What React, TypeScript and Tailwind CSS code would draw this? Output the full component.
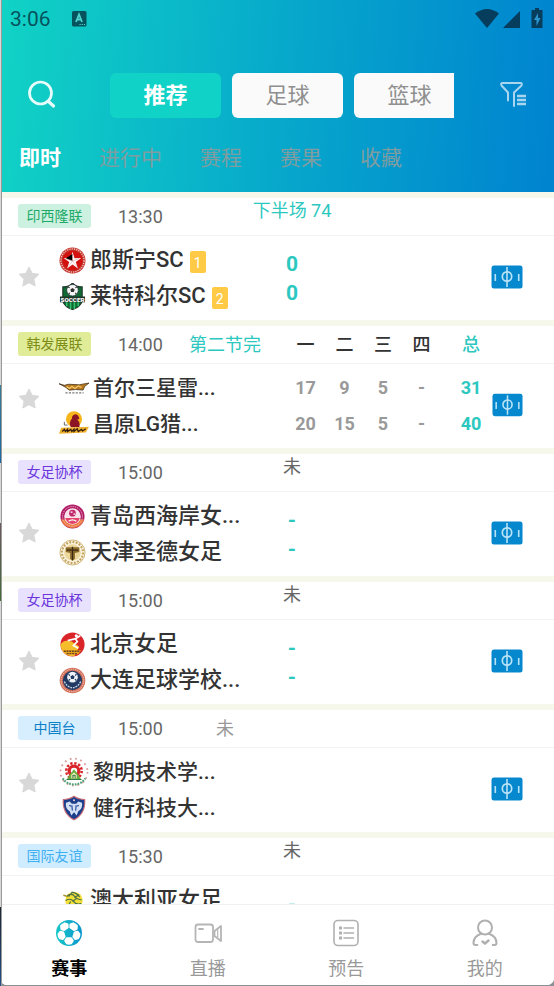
import type { ReactNode } from "react";

const pentagon = (cx: number, cy: number, r: number, turn = -90) =>
  [0, 1, 2, 3, 4]
    .map((i) => {
      const a = ((turn + i * 72) * Math.PI) / 180;
      return `${(cx + r * Math.cos(a)).toFixed(1)},${(cy + r * Math.sin(a)).toFixed(1)}`;
    })
    .join(" ");

const starPoints = (cx: number, cy: number, r: number, inner: number) =>
  Array.from({ length: 10 }, (_, i) => {
    const a = ((-90 + i * 36) * Math.PI) / 180;
    const d = i % 2 ? inner : r;
    return `${(cx + d * Math.cos(a)).toFixed(1)},${(cy + d * Math.sin(a)).toFixed(1)}`;
  }).join(" ");

function Crest({ children, label }: { children: ReactNode; label: string }) {
  return (
    <svg viewBox="0 0 28 28" className="size-full" role="img" aria-label={label}>
      {children}
    </svg>
  );
}

const RedStar = () => (
  <Crest label="郎斯宁SC">
    <circle cx="14" cy="14" r="13.5" fill="#c5302b" />
    <circle cx="14" cy="14" r="12" fill="none" stroke="#eec3b8" strokeWidth="1.4" strokeDasharray="1.4 1" />
    <circle cx="14" cy="14" r="10.2" fill="#d3110f" />
    <polygon points={starPoints(14, 14.5, 9.6, 3.6)} fill="#fff" />
    <path d="M14 7v7.5L7 12M14 14.5l7-2.500M14 14.5l-4.500 6M14 14.5l4.500 6" stroke="#e0a0a0" strokeWidth=".6" />
  </Crest>
);

const SoccerShield = () => (
  <Crest label="莱特科尔SC">
    <path d="M4 4q6 .5 10-4 4 4.500 10 4v15q-2 6-10 8.500Q6 25 4 19Z" fill="#0d6b33" stroke="#1b3326" strokeWidth="1.2" />
    <path d="M8 19v5M12 19v8M16 19v8M20 19v5" stroke="#33c26b" strokeWidth="1.6" />
    <circle cx="14" cy="7.500" r="6" fill="#f4f7f5" stroke="#223" strokeWidth=".7" />
    <polygon points={pentagon(14, 7.5, 2.4)} fill="#333" />
    <path d="M9 4l2 1M19 4l-2 1M10 12l1-2M18 12l-1-2" stroke="#333" strokeWidth="1.200" />
    <rect x="1" y="14" width="26" height="6" fill="#20352a" />
    <text x="14" y="19.300" textAnchor="middle" fontSize="6.500" fontWeight="900" fontFamily="Roboto, sans-serif" fill="#fff">
      SOCCER
    </text>
  </Crest>
);

const Thunders = () => (
  <Crest label="首尔三星雷霆">
    <path d="M0 10l5 1.500L9 10.500l10 .500 4-.800 5-.800-4 3-1.500 3.500-7-.500-6 .600-3-2.500Z" fill="#b9791f" stroke="#3c2b15" strokeWidth=".7" />
    <path d="M7 12.500l3 2 2-2 3 2 3-2.500 3 1.500" stroke="#f7ce70" strokeWidth="1.100" fill="none" />
    <path d="M6 18.500h17" stroke="#777" strokeWidth="1.100" strokeDasharray="2 1.200" />
  </Crest>
);

const Sakers = () => (
  <Crest label="昌原LG猎隼">
    <circle cx="14" cy="9.500" r="7.500" fill="#f7b51c" />
    <path d="M11 17q-2-5 1-8 0-3 3-4 3 0 4 4l-2 1q3 2 2 7Z" fill="#8b1524" />
    <path d="M5 12v3h3" stroke="#666" strokeWidth=".9" fill="none" />
    <path d="M2 17.500l26-1-3 5.500-25 1Z" fill="#efb12c" />
    <path d="M3 21l2-2 1 2 2-2v2l3-2 1 2 2-2v2l3-2.500 1 2.500 3-2 1 1.500 3-2" stroke="#2f1a10" strokeWidth="1.200" fill="none" />
  </Crest>
);

const PinkCrest = () => (
  <Crest label="青岛西海岸女足">
    <circle cx="14" cy="14" r="12.500" fill="#b01c66" />
    <path d="M2 17a12.500 12.500 0 0 0 24 0Z" fill="#ec7a3c" />
    <circle cx="14" cy="14" r="10.300" fill="none" stroke="#f2b4c4" strokeDasharray="1.300 1" />
    <circle cx="14" cy="14" r="8.600" fill="#fae3ea" />
    <path d="M6.500 15.500h15a7.600 7.600 0 0 1-15 0Z" fill="#e2456c" />
    <circle cx="14" cy="10.500" r="3.500" fill="#c02a6c" />
    <path d="M12 9.500h2M15 11.500h2M10 19q4-3 8 0" stroke="#fff" strokeWidth="1.300" fill="none" />
  </Crest>
);

const GoldCrest = () => (
  <Crest label="天津圣德女足">
    <circle cx="14" cy="14" r="13" fill="#fbf6e6" stroke="#cbb174" strokeWidth="1" />
    <circle cx="14" cy="14" r="10.900" fill="none" stroke="#c3a35b" strokeWidth="2.200" strokeDasharray="2 1.400" />
    <circle cx="14" cy="14" r="8.600" fill="#ecd79b" />
    <path d="M7 8.500h14v5l-4.500 1V20.500l-2.500 2-2.500-2v-6l-4.500-1Z" fill="#8b6a2c" />
    <path d="M14 8v14M8 11.500h12" stroke="#3b2a13" strokeWidth="1.300" />
  </Crest>
);

const BeijingCrest = () => (
  <Crest label="北京女足">
    <circle cx="14" cy="14" r="12.500" fill="#d9252a" />
    <path d="M1.500 14Q5 8 13 11l8 5-5 10A12.500 12.500 0 0 1 1.500 14Z" fill="#f6bd2b" />
    <path d="M9 10l8-2 2 3-4 4 5 3M17 8l5-3" stroke="#fff" strokeWidth="1.800" fill="none" />
    <circle cx="18" cy="5" r="1.700" fill="#fff" />
    <path d="M4 20h19l-3 4H8Z" fill="#e6a221" />
    <path d="M5 21h17M8 23.500h11" stroke="#6b421d" strokeWidth="1.300" strokeDasharray="2 .800" />
  </Crest>
);

const DalianCrest = () => (
  <Crest label="大连足球学校">
    <circle cx="14" cy="14" r="13.300" fill="#d3705a" />
    <circle cx="14" cy="14" r="11.700" fill="none" stroke="#f3cfc2" strokeDasharray="1.300 1" />
    <circle cx="14" cy="14" r="10" fill="#223a63" />
    <circle cx="14" cy="10.500" r="5.500" fill="#eff3f8" />
    <polygon points={pentagon(14, 10.5, 2.3)} fill="#223a63" />
    <path d="M10 7l1 2M18 7l-1 2M10 14l1.500-1.500M18 14l-1.500-1.500" stroke="#223a63" strokeWidth="1.200" />
    <path d="M5.500 15q3 6 8 6.500M22.500 15q-3 6-8 6.500" stroke="#c7d3e4" strokeWidth="1.500" strokeDasharray="2 1" fill="none" />
  </Crest>
);

const GearCrest = () => (
  <Crest label="黎明技术学院">
    <circle cx="14" cy="14" r="12.600" fill="none" stroke="#d69b9b" strokeWidth="1.700" strokeDasharray="1.600 3.400" />
    <path d="M3.500 20a12.600 12.600 0 0 0 21 0" fill="none" stroke="#4f9f78" strokeWidth="2" strokeDasharray="1.600 1" />
    <circle cx="14" cy="13" r="7.200" fill="none" stroke="#d8262a" strokeWidth="2.400" strokeDasharray="2.200 1.570" />
    <circle cx="14" cy="13" r="6" fill="#d8262a" />
    <circle cx="14" cy="13" r="3" fill="#fff" />
    <path d="M7.500 20.500l4-6 2.500-3 2.500 3 4 6Z" fill="#68ae3e" />
    <path d="M11.500 20v-3.500l2.500-2 2.500 2V20Z" fill="#fff3c2" />
    <path d="M13 20v-3h2v3M7 21h14" stroke="#2e7a40" fill="none" />
  </Crest>
);

const BlueShield = () => (
  <Crest label="健行科技大学">
    <path d="M4 6q6 0 10-3 4 3 10 3 1 13-10 19Q3 19 4 6Z" fill="#1c3f8c" stroke="#c96b74" strokeWidth="1" />
    <path d="M6.500 9l3.500-1 2 2h4l2-2 3.500 1q1 5-3.500 8l-1.500 4-2.500-3-2.500 3L10 17q-4.500-3-3.500-8Z" fill="#d3e0f4" />
    <path d="M12 11.500l.5 5M16 11.500l-.5 5M9.500 11.500l2 .800M18.500 11.500l-2 .800" stroke="#3c5ea6" strokeWidth="1.200" fill="none" />
    <circle cx="14" cy="6.800" r="1" fill="#e6c3c8" />
  </Crest>
);

const YellowBall = () => (
  <Crest label="澳大利亚女足">
    <circle cx="15.500" cy="14" r="9" fill="#f2df3a" />
    <path d="M8.500 9q5-3 8 1t7 3M7 14q5-3 8 1t8 2M13 5.500q5 0 8.500 5M9 19q4-2 7 2M14 5l-4 5M21 8l-5 3M14 15l4-3M12 15l-2 4" stroke="#4b7147" strokeWidth="1.200" fill="none" />
    <path d="M4.500 8.500l5 1.500" stroke="#a18d28" strokeWidth="1.500" />
  </Crest>
);

type Team = { name: string; crest: ReactNode; card?: string; score?: string; quarters?: string[] };
type Match = {
  id: number;
  sport: "football" | "basketball";
  league: string;
  badge: string;
  time: string;
  status: string;
  live?: boolean;
  teams: Team[];
};

const matches: Match[] = [
  {
    id: 1, sport: "football", league: "印西隆联", badge: "bg-[#cdf1e1] text-[#1daa68]", time: "13:30", status: "下半场 74", live: true,
    teams: [
      { name: "郎斯宁SC", crest: <RedStar />, card: "1", score: "0" },
      { name: "莱特科尔SC", crest: <SoccerShield />, card: "2", score: "0" },
    ],
  },
  {
    id: 2, sport: "basketball", league: "韩发展联", badge: "bg-[#e1ec98] text-[#7c8c16]", time: "14:00", status: "第二节完", live: true,
    teams: [
      { name: "首尔三星雷...", crest: <Thunders />, quarters: ["17", "9", "5", "-", "31"] },
      { name: "昌原LG猎...", crest: <Sakers />, quarters: ["20", "15", "5", "-", "40"] },
    ],
  },
  {
    id: 3, sport: "football", league: "女足协杯", badge: "bg-[#e9e2fe] text-[#6b35dc]", time: "15:00", status: "未",
    teams: [
      { name: "青岛西海岸女...", crest: <PinkCrest />, score: "-" },
      { name: "天津圣德女足", crest: <GoldCrest />, score: "-" },
    ],
  },
  {
    id: 4, sport: "football", league: "女足协杯", badge: "bg-[#e9e2fe] text-[#6b35dc]", time: "15:00", status: "未",
    teams: [
      { name: "北京女足", crest: <BeijingCrest />, score: "-" },
      { name: "大连足球学校...", crest: <DalianCrest />, score: "-" },
    ],
  },
  {
    id: 5, sport: "basketball", league: "中国台", badge: "bg-[#d6eefe] text-[#0f80c8]", time: "15:00", status: "未",
    teams: [
      { name: "黎明技术学...", crest: <GearCrest /> },
      { name: "健行科技大...", crest: <BlueShield /> },
    ],
  },
  {
    id: 6, sport: "football", league: "国际友谊", badge: "bg-[#d0ecff] text-[#3fb0f2]", time: "15:30", status: "未",
    teams: [{ name: "澳大利亚女足", crest: <YellowBall />, score: "-" }],
  },
];

function FavouriteButton({ raised }: { raised: boolean }) {
  return (
    <button type="button" aria-label="收藏比赛" className={raised ? "pb-[14px]" : "pb-[2px]"}>
      <svg viewBox="0 0 22 22" className="size-[22px]" fill="#d8d8d8" stroke="#d8d8d8" strokeLinejoin="round">
        <polygon points={starPoints(11, 11.5, 10.5, 5.2)} />
      </svg>
    </button>
  );
}

function PitchButton() {
  return (
    <button type="button" aria-label="比赛动画" className="h-[24px] w-[32px]">
      <svg viewBox="0 0 32 24" className="size-full" fill="none" stroke="#b9e3f7">
        <rect x=".5" y=".5" width="31" height="23" rx="2.500" fill="#0688cf" stroke="none" />
        <circle cx="16" cy="11.500" r="4.700" strokeWidth="1.700" />
        <path d="M16 2v20" strokeWidth="1.600" />
        <path d="M4.300 9v7M27.700 9v7" strokeWidth="1.600" />
      </svg>
    </button>
  );
}

function MatchCard({ match }: { match: Match }) {
  const football = match.sport === "football";
  const hasTable = match.teams.some((t) => t.quarters);
  const tone = match.live ? "text-[#2cc8bf]" : football ? "text-[#666]" : "text-[#999]";
  return (
    <article className="flex h-[128px] shrink-0 border-t-6 border-[#f7f8ec] bg-white">
      <div className={`flex shrink-0 flex-col ${football ? "w-[247px]" : "w-[286px]"}`}>
        <header className="flex h-[38px] shrink-0 items-center border-b border-[#f2f2f2] pl-[18px]">
          <span className={`mb-[2px] h-[24px] w-[73px] rounded-[3px] text-center text-[14px] leading-[24px] ${match.badge}`}>{match.league}</span>
          <time className="ml-[27px] w-[67px] text-[18px] leading-[24px] text-[#666]">{match.time}</time>
          {!football && <span className={`w-[80px] text-center text-[18px] leading-[24px] ${tone}`}>{match.status}</span>}
        </header>
        <div className="flex flex-1 items-center pl-[18px]">
          <FavouriteButton raised={!football} />
          <ul className={`ml-[19px] h-[72px] font-medium text-[#333] ${football ? "text-[22px]" : "text-[21px]"}`}>
            {match.teams.map((team) => (
              <li key={team.name} className="flex h-[36px] items-center">
                <span className={football ? "size-[27px]" : "size-[30px]"}>{team.crest}</span>
                <span className="ml-[4px] leading-[36px] whitespace-nowrap">{team.name}</span>
                {team.card && (
                  <span className="mt-1 ml-[6px] h-[22px] w-[16px] rounded-[2px] bg-[#ffca45] text-center text-[14px] leading-[24px] font-normal text-white">
                    {team.card}
                  </span>
                )}
              </li>
            ))}
          </ul>
        </div>
      </div>

      {football && (
        <div className="flex w-[90px] shrink-0 flex-col text-center">
          <div className={`h-[38px] border-b border-[#f2f2f2] text-[18px] leading-[26px] whitespace-nowrap ${tone}`}>{match.status}</div>
          <div className="flex flex-1 flex-col pt-[14px] text-[21px] leading-[29px] font-bold text-[#2cc8bf]">
            {match.teams.map((team) => (
              <span key={team.name}>{team.score}</span>
            ))}
          </div>
        </div>
      )}

      {hasTable && (
        <table className="h-[122px] w-[206px] shrink-0 table-fixed border-separate border-spacing-0 text-center text-[18px]">
          <thead>
            <tr className="h-[38px] text-[#333]">
              <th scope="col" className="w-[39px] border-b border-[#f2f2f2] p-0 font-medium">一</th>
              <th scope="col" className="w-[39px] border-b border-[#f2f2f2] p-0 font-medium">二</th>
              <th scope="col" className="w-[38px] border-b border-[#f2f2f2] p-0 font-medium">三</th>
              <th scope="col" className="w-[39px] border-b border-[#f2f2f2] p-0 font-medium">四</th>
              <th scope="col" className="border-b border-[#f2f2f2] p-0 pl-[9px] font-medium text-[#2cc8bf]">总</th>
            </tr>
          </thead>
          <tbody className="font-bold text-[#999]">
            {match.teams.map((team, row) => (
              <tr key={team.name} className="h-[42px]">
                {team.quarters?.map((points, i) => (
                  <td key={i} className={`p-0 ${row === 0 ? "pt-1" : "pb-2"} ${i === 4 ? "pl-[9px] text-[#2cc8bf]" : ""}`}>
                    {points}
                  </td>
                ))}
              </tr>
            ))}
          </tbody>
        </table>
      )}

      <div className="flex min-w-0 flex-1 flex-col">
        <div className="h-[38px] shrink-0 border-b border-[#f2f2f2]" />
        <div className="flex flex-1 items-center justify-end pr-[31px] pb-[2px]">
          <PitchButton />
        </div>
      </div>
    </article>
  );
}

function BallIcon() {
  return (
    <svg viewBox="0 0 28 28" className="size-[28px]">
      <defs>
        <linearGradient id="ball" x1="0" x2="1" y1="0" y2="0">
          <stop offset="0" stopColor="#18c8c8" />
          <stop offset="1" stopColor="#0a94cd" />
        </linearGradient>
      </defs>
      <circle cx="14" cy="14" r="13" fill="url(#ball)" />
      <g fill="#fff" stroke="#fff" strokeWidth="2" strokeLinejoin="round">
        {[0, 72, 144, 216, 288].map((turn) => (
          <path key={turn} d="M11.800 19.300h4.400l1.600 2.400-1.600 2.600q-2.200.700-4.400 0l-1.600-2.600Z" transform={`rotate(${turn} 14 14)`} />
        ))}
      </g>
    </svg>
  );
}

const navItems = [
  { label: "赛事", active: true, icon: <BallIcon /> },
  {
    label: "直播",
    icon: (
      <svg viewBox="0 0 28 28" className="size-[28px]" fill="none" stroke="#b5b5b5" strokeWidth="1.800" strokeLinejoin="round">
        <rect x="1.500" y="5.500" width="17.500" height="17.500" rx="2.500" />
        <path d="M5 10h4" strokeLinecap="round" />
        <path d="M20.500 12l6.500-5v15l-6.500-5Z" />
        <path d="M23.700 10.500v8" strokeWidth="1.200" />
      </svg>
    ),
  },
  {
    label: "预告",
    icon: (
      <svg viewBox="0 0 28 28" className="size-[28px]" fill="none" stroke="#b0b0b0" strokeWidth="1.600">
        <rect x="2" y="1.500" width="24" height="25" rx="4" />
        <path d="M12 9h9.500M12 14h9.500M12 19h9.500" strokeLinecap="round" />
        <path d="M7 9h3M7 14h3M7 19h3" strokeWidth="2.800" />
      </svg>
    ),
  },
  {
    label: "我的",
    icon: (
      <svg viewBox="0 0 28 28" className="size-[28px]" fill="none" stroke="#b0b0b0" strokeWidth="2" strokeLinecap="round" strokeLinejoin="round">
        <circle cx="14" cy="8.500" r="7" />
        <path d="M10 14.800C5.500 16.500 2.500 20 2.500 24q0 2 2 2h1.800M18 14.800c4.500 1.700 7.500 5.200 7.500 9.200q0 2-2 2h-1.800" />
        <path d="M11.500 22.500l2.500 2 3.500-3" strokeWidth="2.500" />
      </svg>
    ),
  },
];

function StatusBar() {
  return (
    <div className="flex h-[38px] items-center pr-[9px] pl-[10px] text-[#06535d]">
      <span className="text-[21px] leading-[38px]">3:06</span>
      <svg viewBox="0 0 15 16" className="ml-[21px] h-[16px] w-[15px]">
        <rect width="14.500" height="15.500" rx="1.500" fill="#06535d" />
        <path d="M4 11L7 3.500l3 7.500M5 8.500h4" stroke="#4fd3ce" strokeWidth="1.800" fill="none" />
        <path d="M7.500 13.500h6" stroke="#4fd3ce" strokeDasharray="1.200 1" />
      </svg>
      <svg viewBox="0 0 70 22" className="mb-[2px] ml-auto h-[22px] w-[70px]" fill="#063c5c">
        <path d="M0 6.500Q12-2.500 24 6.500L12 21Z" />
        <path d="M45 4v17H28Z" />
        <path d="M60 1h4v2h3.500v18h-11V3H60Z" />
        <path d="M63 6l-4 7h2.500v6l4-8H63Z" fill="#2b95cf" />
      </svg>
    </div>
  );
}

export default function App() {
  const sports = ["推荐", "足球", "篮球"];
  const filters = ["即时", "进行中", "赛程", "赛果", "收藏"];
  return (
    <div className="relative h-screen bg-[#8b9095] pb-px font-[Roboto,'Noto_Sans_CJK_SC',sans-serif]">
      <div className="flex h-full flex-col overflow-hidden rounded-b-[7px] bg-white">
        <header className="h-[192px] shrink-0 bg-[linear-gradient(95deg,#11d3c5_0%,#07a9cb_50%,#0083d0_100%)]">
          <StatusBar />
          <div className="mt-[35px] flex h-[45px] items-center">
            <button type="button" aria-label="搜索" className="mb-1 ml-[26px] size-[32px] shrink-0">
              <svg viewBox="0 0 32 32" className="size-[32px]" fill="none" stroke="#e6fbfa" strokeWidth="2.700" strokeLinecap="round">
                <circle cx="14.500" cy="15" r="11" />
                <path d="M22.500 23.500l5 4.500" strokeWidth="3.200" />
              </svg>
            </button>
            <div className="ml-[52px] flex min-w-0 flex-1 gap-[11px] overflow-hidden">
              {sports.map((sport, i) => (
                <button
                  key={sport}
                  type="button"
                  className={`h-[45px] w-[111px] shrink-0 rounded-[6px] text-[22px] leading-[45px] ${
                    i === 0 ? "bg-[#11d2c6] font-bold text-white" : "bg-[#fafafa] text-[#8f8f8f]"
                  }`}
                >
                  {sport}
                </button>
              ))}
            </div>
            <button type="button" aria-label="筛选" className="mr-[26px] mb-1 ml-[46px] size-[28px] shrink-0">
              <svg viewBox="0 0 28 28" className="size-[28px]" fill="none" stroke="#a9d5ee" strokeWidth="2" strokeLinejoin="round" strokeLinecap="round">
                <path d="M8 20.500v-8L1.500 5.500q-1-2.500 1-2.500h18q2 0 1 2.500l-7.500 7V26" />
                <path d="M17 16h9M17 20h9M17 24h9" strokeLinecap="butt" strokeWidth="2.400" />
              </svg>
            </button>
          </div>
          <nav aria-label="赛程筛选" className="mt-[25px] flex gap-[38px] pl-[19px] text-[21px] leading-[30px]">
            {filters.map((filter, i) => (
              <button key={filter} type="button" className={i === 0 ? "font-bold text-white" : "text-[#7f9da1]"}>
                {filter}
              </button>
            ))}
          </nav>
        </header>

        <main className="flex min-h-0 flex-1 flex-col overflow-y-auto [scrollbar-width:none]">
          {matches.map((match) => (
            <MatchCard key={match.id} match={match} />
          ))}
        </main>

        <nav aria-label="主导航" className="grid h-[81px] shrink-0 grid-cols-4 border-t border-[#f0f0f0] bg-white">
          {navItems.map((item) => (
            <a
              key={item.label}
              href="#"
              aria-current={item.active ? "page" : undefined}
              className={`flex flex-col items-center pt-[14px] text-[18px] leading-[28px] ${
                item.active ? "font-bold text-black" : "text-[#999]"
              }`}
            >
              {item.icon}
              <span className="mt-[8px]">{item.label}</span>
            </a>
          ))}
        </nav>
      </div>
      <div className="absolute inset-y-0 left-0 w-[2px] border-r border-[#9a9a9a] bg-[linear-gradient(180deg,#d8d8d8_0%,#d8d8d8_39%,#3a7d91_39%,#1669a8_47%,#d8d8d8_47%,#d8d8d8_53%,#6d5960_53%,#3f6b35_61%,#d8d8d8_61%,#d8d8d8_92%,#1c2430_92%,#24508a_100%)]" />
    </div>
  );
}
